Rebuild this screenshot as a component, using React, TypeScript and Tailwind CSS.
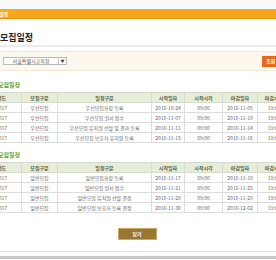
import React from "react";

type Row = {
  year: string;
  kind: string;
  step: string;
  startDate: string;
  startTime: string;
  endDate: string;
  endTime: string;
};

const priority: Row[] = [
  { year: "2017", kind: "우선모집", step: "우선모집요강 등록", startDate: "2016-10-24", startTime: "09:00", endDate: "2016-11-05", endTime: "19:00" },
  { year: "2017", kind: "우선모집", step: "우선모집 원서 접수", startDate: "2016-11-07", startTime: "09:00", endDate: "2016-11-10", endTime: "19:00" },
  { year: "2017", kind: "우선모집", step: "우선모집 유치원 선발 및 결과 등록", startDate: "2016-11-11", startTime: "09:00", endDate: "2016-11-14", endTime: "19:00" },
  { year: "2017", kind: "우선모집", step: "우선모집 보호자 유치원 등록", startDate: "2016-11-15", startTime: "09:00", endDate: "2016-11-16", endTime: "19:00" },
];

const general: Row[] = [
  { year: "2017", kind: "일반모집", step: "일반모집요강 등록", startDate: "2016-11-17", startTime: "09:00", endDate: "2016-11-18", endTime: "19:00" },
  { year: "2017", kind: "일반모집", step: "일반모집 원서 접수", startDate: "2016-11-21", startTime: "09:00", endDate: "2016-11-25", endTime: "19:00" },
  { year: "2017", kind: "일반모집", step: "일반모집 유치원 선발 결정", startDate: "2016-11-28", startTime: "09:00", endDate: "2016-11-29", endTime: "19:00" },
  { year: "2017", kind: "일반모집", step: "일반모집 보호자 등록 결정", startDate: "2016-11-30", startTime: "09:00", endDate: "2016-12-02", endTime: "19:00" },
];

const headers = ["년도", "모집구분", "일정구분", "시작일자", "시작시각", "마감일자", "마감시각"];
const widths = ["w-[40px]", "w-[36px]", "w-[94px]", "w-[33px]", "w-[38px]", "w-[35px]", "w-[33px]"];

function ScheduleTable({ title, rows }: { title: string; rows: Row[] }) {
  return (
    <div>
      {/* Section title */}
      <div className="h-[8px] -ml-[13px] text-[6px] leading-[8px] font-bold text-[#5f9e1f] whitespace-nowrap">{title}</div>

      <table className="-ml-[19px] mt-[3px] w-[309px] table-fixed border-collapse border-t border-t-[#a9c486] text-[5px] text-center">
        <colgroup>
          {widths.map((w, i) => (
            <col key={i} className={w} />
          ))}
        </colgroup>
        <thead>
          <tr className="h-[10px] bg-[#e6eed9]">
            {headers.map((h) => (
              <th key={h} className="border border-[#d6dccd] font-bold text-[#56603f] leading-[8px] p-0">
                {h}
              </th>
            ))}
          </tr>
        </thead>
        <tbody>
          {rows.map((r, i) => (
            <tr key={i} className="h-[10px] text-[#666666]">
              <td className="border border-[#dddddd] p-0 leading-[8px]">{r.year}</td>
              <td className="border border-[#dddddd] p-0 leading-[8px]">{r.kind}</td>
              <td className="border border-[#dddddd] p-0 leading-[8px] whitespace-nowrap">{r.step}</td>
              <td className="border border-[#dddddd] p-0 leading-[8px]">{r.startDate}</td>
              <td className="border border-[#dddddd] p-0 leading-[8px]">{r.startTime}</td>
              <td className="border border-[#dddddd] p-0 leading-[8px]">{r.endDate}</td>
              <td className="border border-[#dddddd] p-0 leading-[8px]">{r.endTime}</td>
            </tr>
          ))}
        </tbody>
      </table>
    </div>
  );
}

export default function App() {
  return (
    <div
      className="w-[276px] h-[260px] overflow-hidden bg-white"
      style={{ fontFamily: '"Noto Sans CJK KR", "Noto Sans", sans-serif' }}
    >
      <div className="h-[9px] bg-[#fafafa]" />

      {/* Orange top bar */}
      <div className="h-[10px] bg-[#f8a61c] border-b border-b-[#e48f0c] flex items-center overflow-hidden">
        <span className="-ml-[10px] text-[5px] text-white font-bold whitespace-nowrap">모집일정</span>
      </div>

      {/* Page title */}
      <div className="mt-[12px] h-[16px] border-b-2 border-b-[#ececec] flex items-start">
        <h1 className="text-[9px] leading-[13px] font-bold text-[#222222]">모집일정</h1>
      </div>

      {/* Filter box */}
      <div className="mt-[4px] h-[20px] bg-[#fcf8ee] border-y border-y-[#f1ead8] flex items-center justify-between">
        <div className="ml-[3px] w-[64px] h-[8px] bg-white border border-[#bbbbbb] flex items-center">
          <span className="flex-1 text-[5px] leading-[6px] text-[#555555] text-center">서울특별시교육청</span>
          <span className="w-[8px] h-full border-l border-l-[#cccccc] flex items-center justify-center text-[4px] text-[#333333]">▼</span>
        </div>
        <div className="w-[20px] h-[11px] -mr-[6px] bg-[#e8691c] flex items-center pl-[4px]">
          <span className="text-[5px] text-white font-bold whitespace-nowrap">조회</span>
        </div>
      </div>

      <div className="mt-[10px]">
        <ScheduleTable title="우선모집일정" rows={priority} />
      </div>

      <div className="mt-[8px]">
        <ScheduleTable title="일반모집일정" rows={general} />
      </div>

      {/* Close button */}
      <div className="mt-[15px] flex justify-center">
        <button className="ml-[-2px] w-[39px] h-[12px] bg-[#9a7632] border border-[#c8a862] text-[5px] text-white font-bold flex items-center justify-center">
          닫기
        </button>
      </div>

      {/* Footer lines */}
      <div className="mt-[11px] border-t border-t-[#e2e2e2]" />
      <div className="mt-[4px] h-[3px] bg-[#c9c9c9]" />
    </div>
  );
}
